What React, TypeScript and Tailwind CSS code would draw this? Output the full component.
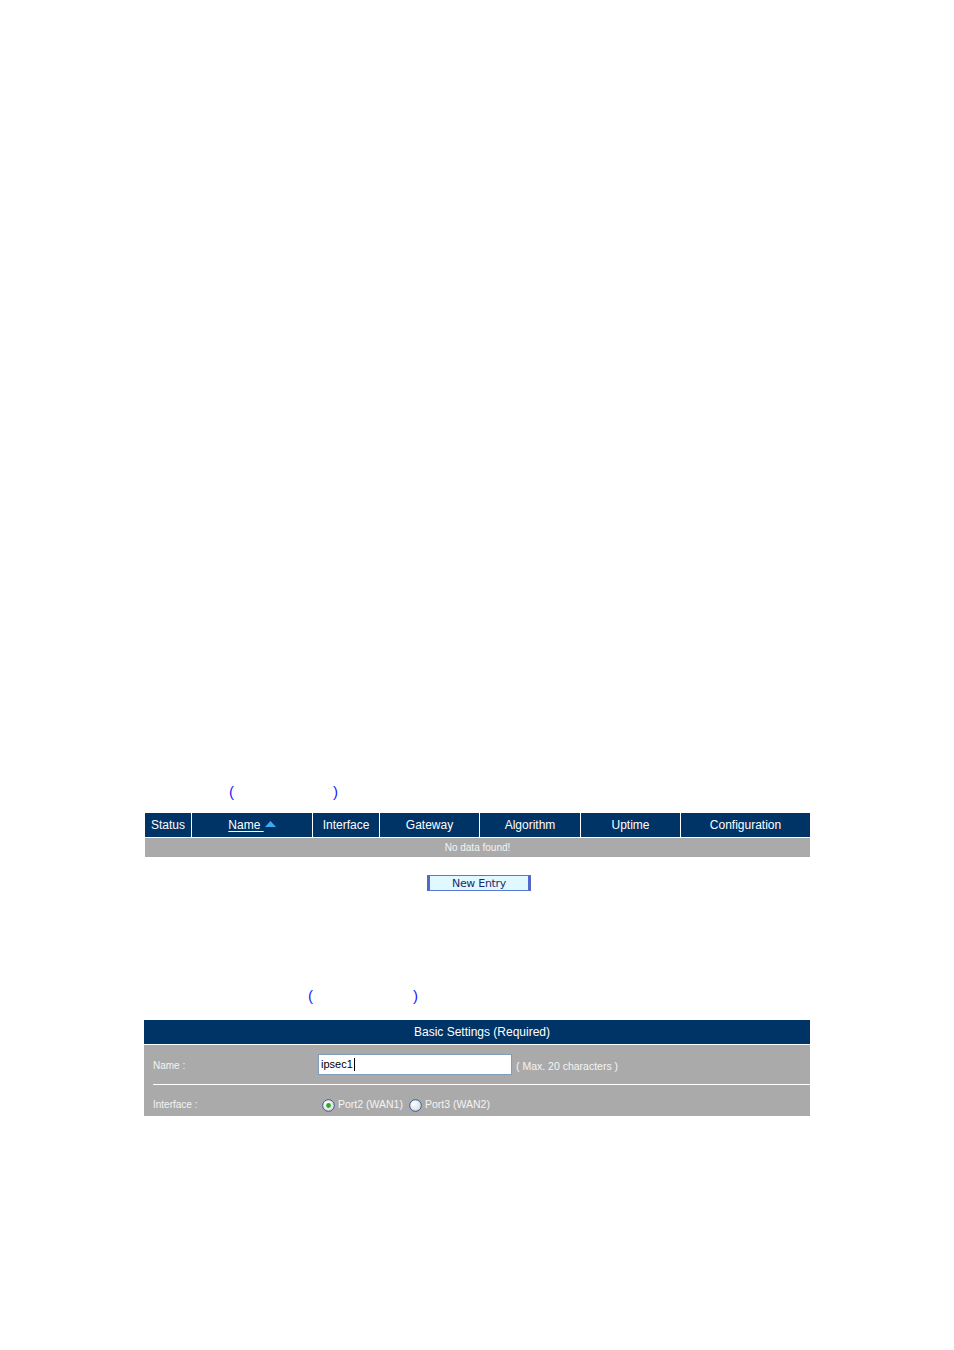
import React from "react";

const cols = [
  { w: 46, label: "Status" },
  { w: 121, label: "Name" },
  { w: 67, label: "Interface" },
  { w: 100, label: "Gateway" },
  { w: 101, label: "Algorithm" },
  { w: 100, label: "Uptime" },
  { w: 130, label: "Configuration" },
];

function Radio({ checked }: { checked?: boolean }) {
  return (
    <svg width="13" height="13" viewBox="0 0 13 13" className="shrink-0">
      <defs>
        <radialGradient id={checked ? "rg1" : "rg2"} cx="0.35" cy="0.35" r="0.8">
          <stop offset="0" stopColor="#ffffff" />
          <stop offset="1" stopColor="#d4d4d4" />
        </radialGradient>
      </defs>
      <circle cx="6.5" cy="6.5" r="5.8" fill={`url(#${checked ? "rg1" : "rg2"})`} stroke="#3a5a8c" strokeWidth="1" />
      {checked && <circle cx="6.5" cy="6.5" r="2.4" fill="#2fa82f" />}
    </svg>
  );
}

export default function App() {
  return (
    <div
      className="w-[954px] h-[1350px] bg-white"
      style={{ fontFamily: '"Liberation Sans", Arial, sans-serif' }}
    >
      <div className="h-[782px]" />
      {/* paren row 1 */}
      <div className="h-[18px] flex items-center text-[#1a1aff] text-[15px] leading-none">
        <span className="ml-[229px] w-[104px]">(</span>
        <span>)</span>
      </div>
      <div className="h-[13px]" />
      {/* table 1 */}
      <div className="ml-[145px] w-[665px]">
        <div className="flex h-[25px] bg-[#003366] text-white text-[12px] border-b border-white">
          {cols.map((c, i) => (
            <div
              key={c.label}
              className={`flex items-center justify-center ${i > 0 ? "border-l border-white" : ""}`}
              style={{ width: c.w }}
            >
              {c.label === "Name" ? (
                <span className="flex items-center underline underline-offset-2">
                  Name&nbsp;
                  <svg width="11" height="6" viewBox="0 0 11 6" className="ml-[1px] mb-[2px]">
                    <polygon points="0,6 5.5,0 11,6" fill="#3fa9f5" />
                  </svg>
                </span>
              ) : (
                c.label
              )}
            </div>
          ))}
        </div>
        <div className="h-[19px] bg-[#aaaaaa] text-[#f4f4f4] text-[10px] flex items-center justify-center">
          No data found!
        </div>
      </div>
      <div className="h-[18px]" />
      {/* button */}
      <div className="flex">
        <button
          className="ml-[427px] w-[104px] h-[16px] bg-[#e0f8ff] border border-[#5a78d8] border-l-[3px] border-r-[3px] border-l-[#5468c8] border-r-[#5468c8] text-[#1a2a6c] text-[11px] leading-none flex items-center justify-center"
          style={{ fontFamily: '"DejaVu Sans", Verdana, sans-serif', letterSpacing: "-0.3px" }}
        >
          New Entry
        </button>
      </div>
      <div className="h-[95px]" />
      {/* paren row 2 */}
      <div className="h-[18px] flex items-center text-[#1a1aff] text-[15px] leading-none">
        <span className="ml-[308px] w-[105px]">(</span>
        <span>)</span>
      </div>
      <div className="h-[16px]" />
      {/* table 2 */}
      <div className="ml-[144px] w-[666px]">
        <div className="h-[25px] bg-[#003366] border-b border-white text-white text-[12px] flex items-center justify-center pl-[10px]">
          Basic Settings (Required)
        </div>
        <div className="bg-[#aaaaaa]">
          <div className="h-[39px] flex items-center text-[10px] text-[#f4f4f4]">
            <div className="w-[174px] pl-[9px] mt-[2px]">Name :</div>
            <div className="w-[194px] h-[21px] bg-white border border-[#7f9db9] flex items-center pl-[2px] text-[11px] text-black">
              ipsec1<span className="inline-block w-[1px] h-[13px] bg-black ml-[1px]" />
            </div>
            <div className="ml-[4px] mt-[5px] text-[10.5px]">( Max. 20 characters )</div>
          </div>
          <div className="ml-[9px] h-[1px] bg-white" />
          <div className="h-[31px] flex items-center text-[10px] text-[#f4f4f4]">
            <div className="w-[178px] pl-[9px] mt-[7px]">Interface :</div>
            <div className="flex items-center mt-[9px] text-[10.5px]">
              <Radio checked />
              <span className="ml-[3px]">Port2 (WAN1)</span>
              <span className="ml-[6px]"><Radio /></span>
              <span className="ml-[3px]">Port3 (WAN2)</span>
            </div>
          </div>
        </div>
      </div>
    </div>
  );
}
